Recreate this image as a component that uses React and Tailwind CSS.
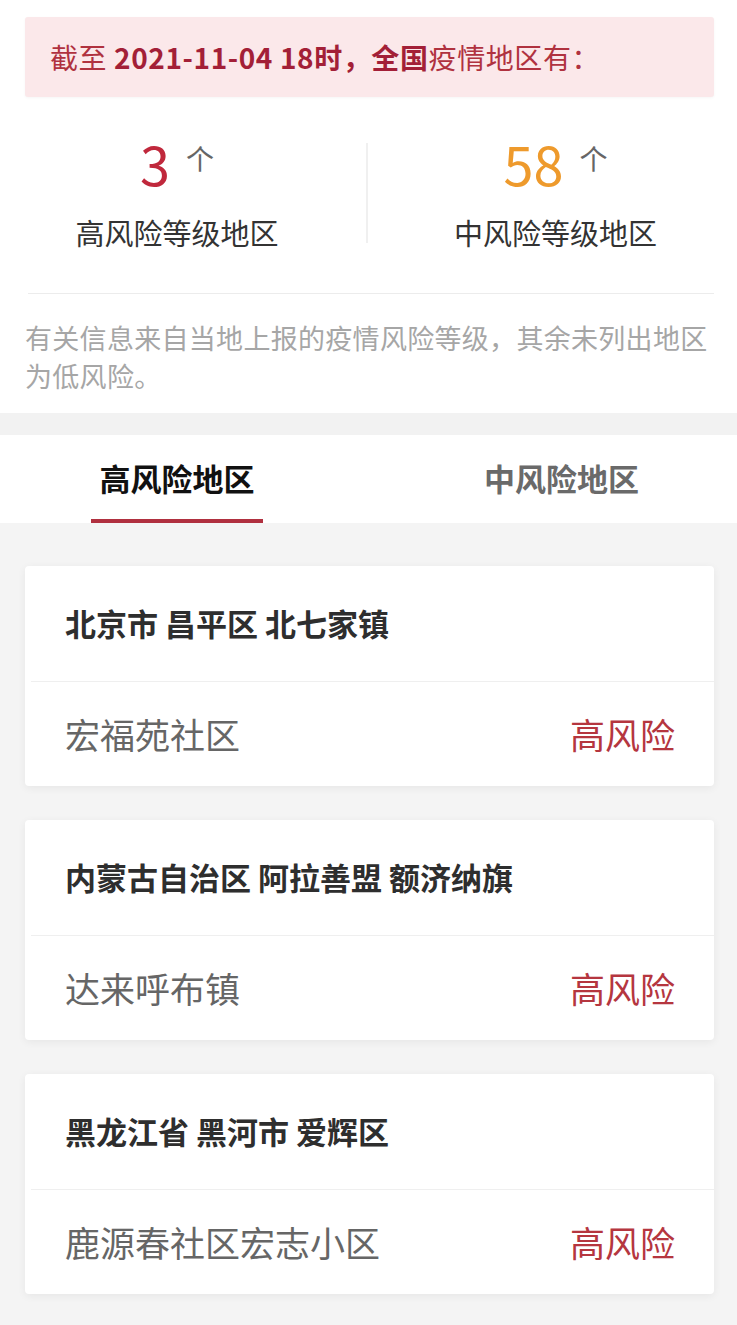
const areas = [
  { title: '北京市 昌平区 北七家镇', place: '宏福苑社区' },
  { title: '内蒙古自治区 阿拉善盟 额济纳旗', place: '达来呼布镇' },
  { title: '黑龙江省 黑河市 爱辉区', place: '鹿源春社区宏志小区' },
];

const font = { fontFamily: '"Noto Sans CJK SC", "Noto Sans", sans-serif' };

const StatBlock = ({ count, color, label, className }) => (
  <div className={`flex flex-col items-center ${className}`}>
    <div className="flex items-start h-[62px]">
      <span className={`text-[54px] leading-[62px] ${color}`}>{count}</span>
      <span className="ml-[16px] mt-[10px] text-[28px] leading-[32px] text-[#666]">个</span>
    </div>
    <div className="mt-[18px] text-[29px] leading-[40px] text-[#333]">{label}</div>
  </div>
);

const AreaCard = ({ area }) => (
  <div className="bg-white rounded-[4px] shadow-[0_2px_8px_rgba(0,0,0,0.06)]">
    <div className="h-[115px] flex items-center pl-[40px]">
      <h3 className="text-[31px] font-bold text-[#2e2e2e]">{area.title}</h3>
    </div>
    <div className="ml-[6px] h-px bg-[#efefef]" />
    <div className="h-[104px] flex items-center justify-between pl-[40px] pr-[39px]">
      <span className="text-[35px] text-[#666]">{area.place}</span>
      <span className="text-[35px] text-[#b5363f]">高风险</span>
    </div>
  </div>
);

export default function App() {
  return (
    <div className="w-[737px] min-h-[1325px] bg-[#f4f4f4]" style={font}>
      <div className="bg-white pt-[17px] pb-[18px]">
        <div className="mx-[25px] mr-[23px] h-[80px] flex items-center pl-[25px] bg-[#fbe8ea] rounded-[3px] shadow-[0_1px_3px_rgba(0,0,0,0.04)]">
          <p className="text-[28px] text-[#b0323f] tracking-[0.6px]">
            截至 <span className="font-bold text-[#a31f37]">2021-11-04 18时，全国</span>疫情地区有：
          </p>
        </div>

        <div className="flex pt-[35px] pb-[41px]">
          <StatBlock count="3" color="text-[#c0283c]" label="高风险等级地区" className="w-[366px] pr-[12px]" />
          <div className="w-[2px] mt-[11px] h-[100px] bg-[#f0f0f0]" />
          <StatBlock count="58" color="text-[#ee9a2c]" label="中风险等级地区" className="flex-1 pl-[6px]" />
        </div>

        <div className="ml-[28px] mr-[23px] h-px bg-[#ececec]" />

        <p className="mt-[25px] px-[25px] text-[27px] leading-[38px] text-[#a6a6a6] tracking-[0.3px]">
          有关信息来自当地上报的疫情风险等级，其余未列出地区为低风险。
        </p>
      </div>

      <div className="h-[22px] bg-[#f2f2f2]" />

      <div className="bg-white h-[88px] flex">
        <div className="w-[354px] flex flex-col items-center">
          <span className="mt-[23px] text-[31px] leading-[40px] font-bold text-[#111]">高风险地区</span>
          <span className="mt-[21px] w-[172px] h-[5px] bg-[#b0303f]" />
        </div>
        <div className="flex-1 flex flex-col items-center pl-[32px]">
          <span className="mt-[23px] text-[31px] leading-[40px] font-bold text-[#6a6a6a]">中风险地区</span>
        </div>
      </div>

      <div className="px-[25px] pr-[23px] pt-[43px] pb-[33px] flex flex-col gap-[34px]">
        {areas.map((area) => (
          <AreaCard key={area.title} area={area} />
        ))}
      </div>
    </div>
  );
}
